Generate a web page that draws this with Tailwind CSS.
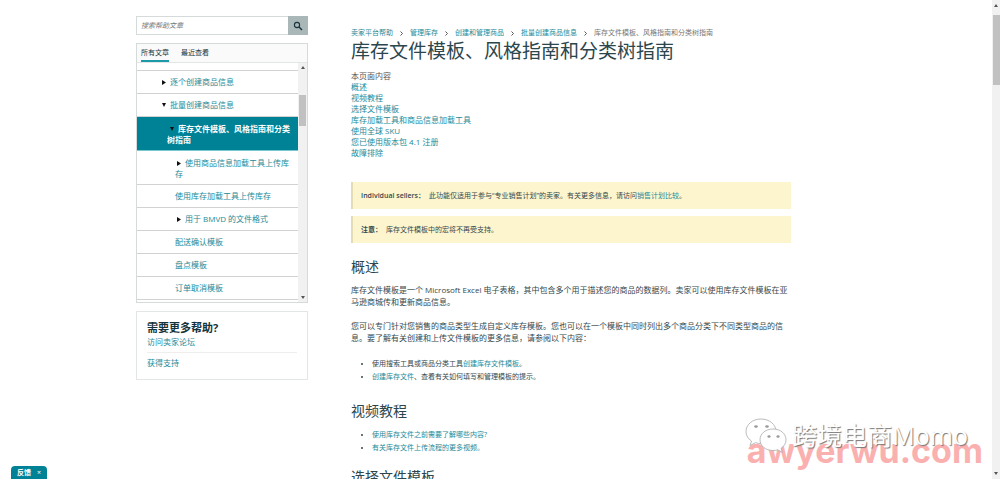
<!DOCTYPE html>
<html lang="zh-CN">
<head>
    <meta charset="UTF-8">
    <meta name="viewport" content="width=device-width, initial-scale=1.0">
    <title>库存文件模板、风格指南和分类树指南</title>
    <script src="https://cdn.jsdelivr.net/npm/@tailwindcss/browser@4"></script>
</head>
<body class="relative h-screen overflow-hidden bg-white font-['Open_Sans','Noto_Sans_CJK_SC',sans-serif] text-[7px] leading-[12px] text-[#33484d]">
    <div class="flex h-full">
        <div class="flex flex-1 items-start gap-[43px] overflow-hidden pl-[136px]">

            <!-- 侧边栏 -->
            <aside class="w-[172px] shrink-0 pt-4 text-[8px] text-[#1d8a99]">
                <form class="flex h-[19px]">
                    <input type="text" aria-label="搜索帮助文章" placeholder="搜索帮助文章" class="min-w-0 flex-1 border border-r-0 border-[#d5dbdb] px-1 text-[7px] italic outline-none placeholder:text-[#777]">
                    <button type="button" aria-label="搜索" class="flex w-5 items-center justify-center bg-[#aab7b8]">
                        <svg class="size-[10px]" viewBox="0 0 10 10" fill="none" stroke="#16333a">
                            <circle cx="4" cy="4" r="2.6" stroke-width="1.1" />
                            <path d="M6 6l3 3" stroke-width="1.4" />
                        </svg>
                    </button>
                </form>

                <div class="mt-2 border border-[#d5dbdb]">
                    <div class="flex h-[19px] items-start gap-3 border-b border-[#e3e6e6] bg-[#fafafa] px-1 pt-[3px] text-[7px] text-[#16333a]">
                        <button type="button" class="border-b-2 border-[#1d9aaa] pb-px">所有文章</button>
                        <button type="button">最近查看</button>
                    </div>
                    <div class="flex h-[239px]">
                        <ul class="flex-1 overflow-hidden">
                            <li class="h-2 border-b border-[#d2d2d2]"></li>
                            <li class="flex h-[23px] items-center gap-1 border-b border-[#d2d2d2] pl-[25px]">
                                <svg class="h-[5px] w-[4px]" viewBox="0 0 4 5"><path d="M0 0l4 2.5L0 5z" fill="#111" /></svg>
                                <a href="#">逐个创建商品信息</a>
                            </li>
                            <li class="flex h-[23px] items-center gap-1 border-b border-[#d2d2d2] pl-[25px]">
                                <svg class="h-[4px] w-[4px]" viewBox="0 0 4 4"><path d="M0 0h4L2 4z" fill="#111" /></svg>
                                <a href="#">批量创建商品信息</a>
                            </li>
                            <li class="flex h-[34px] items-center border-b border-[#7cc6cf] bg-[#008296] pl-[30px] font-bold leading-[11px] text-white">
                                <a href="#"><svg class="mr-1 ml-[3px] inline h-[4px] w-[4px] align-middle" viewBox="0 0 4 4"><path d="M0 0h4L2 4z" fill="#111" /></svg>库存文件模板、风格指南和分类<br>树指南</a>
                            </li>
                            <li class="flex h-[34px] items-center border-b border-[#d2d2d2] pl-[38px] leading-[11px]">
                                <a href="#"><svg class="mr-1 ml-[2px] inline h-[5px] w-[4px] align-middle" viewBox="0 0 4 5"><path d="M0 0l4 2.5L0 5z" fill="#111" /></svg>使用商品信息加载工具上传库<br>存</a>
                            </li>
                            <li class="flex h-[23px] items-center border-b border-[#d2d2d2] pl-[38px]"><a href="#">使用库存加载工具上传库存</a></li>
                            <li class="flex h-[23px] items-center gap-1 border-b border-[#d2d2d2] pl-[40px]">
                                <svg class="h-[5px] w-[4px]" viewBox="0 0 4 5"><path d="M0 0l4 2.5L0 5z" fill="#111" /></svg>
                                <a href="#">用于 BMVD 的文件格式</a>
                            </li>
                            <li class="flex h-[23px] items-center border-b border-[#d2d2d2] pl-[38px]"><a href="#">配送确认模板</a></li>
                            <li class="flex h-[23px] items-center border-b border-[#d2d2d2] pl-[38px]"><a href="#">盘点模板</a></li>
                            <li class="flex h-[23px] items-center border-b border-[#d2d2d2] pl-[38px]"><a href="#">订单取消模板</a></li>
                        </ul>
                        <div class="flex w-[9px] flex-col items-center bg-[#f1f1f1] py-[3px]">
                            <svg class="h-[3px] w-[4px]" viewBox="0 0 4 3"><path d="M0 3h4L2 0z" fill="#555" /></svg>
                            <div class="mt-[26px] h-[31px] w-[7px] bg-[#c1c1c1]"></div>
                            <svg class="mt-auto h-[3px] w-[4px]" viewBox="0 0 4 3"><path d="M0 0h4L2 3z" fill="#555" /></svg>
                        </div>
                    </div>
                </div>

                <div class="mt-2 h-[69px] border border-[#e3e6e6] px-[10px] pt-2">
                    <h2 class="text-[11px] leading-4 font-bold text-[#16333a]">需要更多帮助?</h2>
                    <a href="#" class="block border-b border-[#eee] pb-1">访问卖家论坛</a>
                    <a href="#" class="mt-1 block">获得支持</a>
                </div>
            </aside>

            <!-- 正文 -->
            <main class="max-w-[440px] flex-1 pt-[27px]">
                <nav class="flex items-center gap-[7px] whitespace-nowrap text-[#1d8a99]">
                    <a href="#">卖家平台帮助</a>
                    <svg class="h-[5px] w-[3px]" viewBox="0 0 3 5" fill="none" stroke="#555"><path d="M.5.5l2 2-2 2" /></svg>
                    <a href="#">管理库存</a>
                    <svg class="h-[5px] w-[3px]" viewBox="0 0 3 5" fill="none" stroke="#555"><path d="M.5.5l2 2-2 2" /></svg>
                    <a href="#">创建和管理商品</a>
                    <svg class="h-[5px] w-[3px]" viewBox="0 0 3 5" fill="none" stroke="#555"><path d="M.5.5l2 2-2 2" /></svg>
                    <a href="#">批量创建商品信息</a>
                    <svg class="h-[5px] w-[3px]" viewBox="0 0 3 5" fill="none" stroke="#555"><path d="M.5.5l2 2-2 2" /></svg>
                    <span class="text-[#777]">库存文件模板、风格指南和分类树指南</span>
                </nav>
                <h1 class="text-[19px] leading-[24px] font-normal whitespace-nowrap text-[#2b464d]">库存文件模板、风格指南和分类树指南</h1>

                <div class="mt-[7px] flex flex-col items-start text-[8px] leading-[11px] text-[#1d8a99]">
                    <span class="text-[#555]">本页面内容</span>
                    <a href="#">概述</a>
                    <a href="#">视频教程</a>
                    <a href="#">选择文件模板</a>
                    <a href="#">库存加载工具和商品信息加载工具</a>
                    <a href="#">使用全球 SKU</a>
                    <a href="#">您已使用版本包 4.1 注册</a>
                    <a href="#">故障排除</a>
                </div>

                <div class="mt-6 flex h-[27px] items-center border-l-2 border-[#e3dcb4] bg-[#fdf5ce] pl-2">
                    <p><b class="mr-1 font-semibold">Individual sellers：</b>此功能仅适用于参与“专业销售计划”的卖家。有关更多信息，请访问<a href="#" class="text-[#1d8a99]">销售计划比较</a>。</p>
                </div>
                <div class="mt-[7px] flex h-[27px] items-center border-l-2 border-[#e3dcb4] bg-[#fdf5ce] pl-2">
                    <p><b class="mr-1 font-semibold">注意：</b>库存文件模板中的宏将不再受支持。</p>
                </div>

                <h2 class="mt-[14px] text-[14px] leading-5 text-[#2b464d]">概述</h2>
                <p class="mt-[7px] text-[8px] whitespace-nowrap">库存文件模板是一个 Microsoft Excel 电子表格，其中包含多个用于描述您的商品的数据列。卖家可以使用库存文件模板在亚<br>马逊商城传和更新商品信息。</p>
                <p class="mt-3 text-[8px] whitespace-nowrap">您可以专门针对您销售的商品类型生成自定义库存模板。您也可以在一个模板中同时列出多个商品分类下不同类型商品的信<br>息。要了解有关创建和上传文件模板的更多信息，请参阅以下内容：</p>
                <ul class="mt-[13px] list-disc pl-[21px] leading-[13px]">
                    <li>使用搜索工具或商品分类工具<a href="#" class="text-[#1d8a99]">创建库存文件模板</a>。</li>
                    <li><a href="#" class="text-[#1d8a99]">创建库存文件</a>、查看有关如何填写和管理模板的提示。</li>
                </ul>

                <h2 class="mt-[18px] text-[14px] leading-5 text-[#2b464d]">视频教程</h2>
                <ul class="mt-[7px] list-disc pl-[21px] leading-[13px]">
                    <li><a href="#" class="text-[#1d8a99]">使用库存文件之前需要了解哪些内容?</a></li>
                    <li><a href="#" class="text-[#1d8a99]">有关库存文件上传流程的更多视频。</a></li>
                </ul>

                <h2 class="mt-[13px] text-[14px] leading-5 text-[#2b464d]">选择文件模板</h2>
            </main>
        </div>

        <!-- 页面滚动条 -->
        <div class="flex w-2 flex-col items-center bg-[#f1f1f1] py-1">
            <svg class="h-[3px] w-[4px]" viewBox="0 0 4 3"><path d="M0 3h4L2 0z" fill="#555" /></svg>
            <div class="mt-2 h-[70px] w-[7px] bg-[#c1c1c1]"></div>
            <svg class="mt-auto h-[3px] w-[4px]" viewBox="0 0 4 3"><path d="M0 0h4L2 3z" fill="#555" /></svg>
        </div>
    </div>

    <!-- 反馈 -->
    <div class="absolute bottom-0 left-[11px] flex h-[13px] w-9 items-center justify-between rounded-t-sm bg-[#008296] px-[6px] text-[7px] text-white">
        <button type="button" class="font-bold">反馈</button>
        <button type="button" aria-label="关闭">×</button>
    </div>

    <!-- 水印 -->
    <div class="absolute right-[17px] bottom-[10px] font-['Inter',sans-serif] text-[34px] leading-[36px] font-bold text-[#fbb0b0]">awyerwu.com</div>
    <div class="absolute right-[32px] bottom-[26px] flex items-center gap-1">
        <svg class="h-[36px] w-[44px]" viewBox="0 0 44 36" fill="#fff" stroke="#aaa" stroke-width=".8">
            <path d="M17 2C8.500 2 2 7.500 2 14.500c0 4 2 7.300 5.500 9.500L6 28.500l5.500-2.800c2 .6 3.600.8 5.500.8 8.500 0 15-5.500 15-12.200S25.500 2 17 2z" />
            <path d="M29 12c-7.500 0-13 4.700-13 10.800S21.500 33.500 29 33.500c1.700 0 3.200-.2 4.700-.7l4.600 2.500-1.200-4c3-2 4.900-5 4.900-8.500C42 16.700 36.500 12 29 12z" />
            <g fill="#999" stroke="none">
                <ellipse cx="12" cy="9.500" rx="1.800" ry="1.300" /><ellipse cx="23" cy="9.500" rx="1.800" ry="1.300" />
                <ellipse cx="25" cy="19.500" rx="1.600" ry="1.200" /><ellipse cx="34" cy="19.500" rx="1.600" ry="1.200" />
            </g>
        </svg>
        <span class="text-[25px] leading-[36px] text-white text-shadow-[1px_1px_1px_#777]">跨境电商Momo</span>
    </div>
</body>
</html>
